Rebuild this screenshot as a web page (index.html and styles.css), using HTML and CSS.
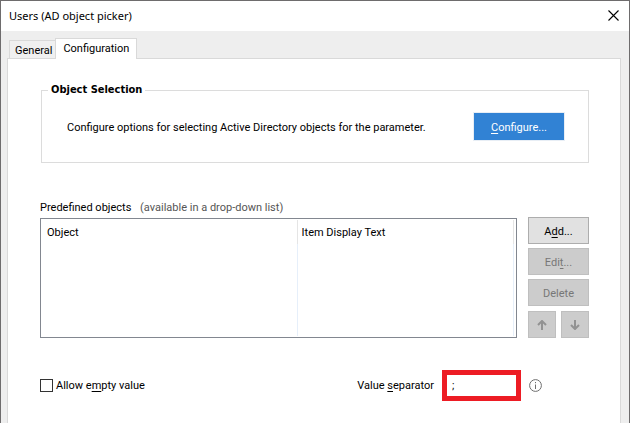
FILE: index.html
```
<!DOCTYPE html>
<html lang="en">
<head>
<meta charset="utf-8">
<title>Users (AD object picker)</title>
<link rel="stylesheet" href="styles.css">
</head>
<body>
<main class="dialog">
  <header class="titlebar">
    <h1 class="title">Users (AD object picker)</h1>
    <button class="close" type="button" aria-label="Close">
      <svg width="11" height="11" viewBox="0 0 11 11"><path d="M.5.5l10 10M10.500.500l-10 10" fill="none" stroke="#000" stroke-width="1.100"/></svg>
    </button>
  </header>
  <div class="content">
    <div class="tabs" role="tablist">
      <button class="tab" type="button" role="tab" aria-selected="false">General</button>
      <button class="tab tab-active" type="button" role="tab" aria-selected="true">Configuration</button>
    </div>
    <section class="panel" role="tabpanel">
      <fieldset class="group">
        <legend class="legend">Object Selection</legend>
        <div class="group-row">
          <p class="text">Configure options for selecting Active Directory objects for the parameter.</p>
          <button class="btn primary" type="button"><u>C</u>onfigure...</button>
        </div>
      </fieldset>
      <p class="list-label">Predefined objects <span class="hint">(available in a drop-down list)</span></p>
      <div class="list-row">
        <div class="list">
          <table class="table">
            <thead><tr><th class="col-object">Object</th><th>Item Display Text</th></tr></thead>
            <tbody><tr><td></td><td></td></tr></tbody>
          </table>
        </div>
        <div class="actions">
          <button class="btn" type="button">A<u>d</u>d...</button>
          <button class="btn" type="button" disabled>Edi<u>t</u>...</button>
          <button class="btn" type="button" disabled>Delete</button>
          <div class="arrows">
            <button class="btn" type="button" aria-label="Move up" disabled>
              <svg width="10" height="10" viewBox="0 0 10 10"><path d="M5 10V1.500M1 5l4-4 4 4" fill="none" stroke="#929292" stroke-width="2"/></svg>
            </button>
            <button class="btn" type="button" aria-label="Move down" disabled>
              <svg width="10" height="10" viewBox="0 0 10 10"><path d="M5 0v8.500M1 5l4 4 4-4" fill="none" stroke="#929292" stroke-width="2"/></svg>
            </button>
          </div>
        </div>
      </div>
      <div class="options">
        <input class="check" type="checkbox" id="empty">
        <label for="empty">Allow e<u>m</u>pty value</label>
        <label class="sep-label" for="sep">Value <u>s</u>eparator</label>
        <input class="sep" type="text" id="sep" value=";">
        <svg class="info" width="13" height="13" viewBox="0 0 13 13"><circle cx="6.500" cy="6.500" r="5.900" fill="none" stroke="#6e6e6e"/><path d="M6.500 3v1.200M6.500 5.500V10" stroke="#6e6e6e"/></svg>
      </div>
    </section>
  </div>
</main>
</body>
</html>
```
FILE: styles.css
```
* { box-sizing: border-box; }
body {
  margin: 0;
  background: #fff;
  color: #000;
  font: 11px/14px Roboto, sans-serif;
}
p, h1 { margin: 0; }
button, input { font: inherit; color: inherit; }
svg { display: block; }
u { text-underline-offset: 2px; text-decoration-thickness: 1px; }

.dialog {
  display: flex;
  flex-direction: column;
  min-height: 100vh;
  border: 1px solid #6e6c6d;
  border-bottom: 0;
  background: #eee;
}
.titlebar {
  display: flex;
  align-items: center;
  justify-content: space-between;
  height: 30px;
  padding: 0 10px 0 8px;
  background: #fff;
}
.title { font: 11px/14px "Noto Sans", sans-serif; }
.close { padding: 0 0 2px; border: 0; background: none; }

.content {
  display: flex;
  flex: 1;
  flex-direction: column;
  padding: 7px 8px 0 6px;
}
.tabs {
  display: flex;
  align-items: flex-end;
  padding-left: 2px;
}
.tab {
  height: 18px;
  padding: 2px 3px 0 5px;
  border: 1px solid #d9d9d9;
  border-width: 1px 0 0 1px;
  background: #f0f0f0;
}
.tab-active {
  position: relative;
  z-index: 1;
  height: 21px;
  margin-bottom: -1px;
  padding: 0 7px;
  border-width: 1px 1px 0;
  background: #fff;
}
.panel {
  flex: 1;
  padding: 24px 31px 0 32px;
  border: 1px solid #d9d9d9;
  border-bottom: 0;
  background: #fff;
}

.group {
  margin: 0 0 38px 1px;
  padding: 15px 23px 21px 25px;
  border: 1px solid #dcdcdc;
}
.legend {
  margin-left: -19px;
  padding: 0 3px;
  font: bold 11px/14px "DejaVu Sans Condensed", "Noto Sans", sans-serif;
}
.group-row {
  display: flex;
  align-items: center;
  justify-content: space-between;
}
.text { padding-top: 2px; }

.list-label { margin-bottom: 2px; }
.hint { margin-left: 6px; color: #555; }
.list-row { display: flex; gap: 11px; }
.list {
  display: flex;
  flex: 1;
  margin-top: 1px;
  padding: 1px 2px;
  border: 1px solid #828790;
}
.table {
  width: 100%;
  height: 100%;
  border-collapse: collapse;
  table-layout: fixed;
}
.table th {
  height: 24px;
  padding: 2px 5px 0 4px;
  border-right: 1px solid #e5e5e5;
  font-weight: normal;
  text-align: left;
}
.table td { border-right: 1px solid #e6effa; }
.col-object { width: 54%; }
.actions {
  display: flex;
  flex-direction: column;
  gap: 4px;
  width: 61px;
}
.btn {
  height: 27px;
  padding: 2px 0 0;
  border: 1px solid #adadad;
  background: #e1e1e1;
}
.btn:disabled {
  border-color: #bfbfbf;
  background: #ccc;
  color: #777;
}
.primary {
  width: 92px;
  height: 29px;
  border-color: #e8eef5;
  background: #3182d4;
  color: #fff;
}
.arrows { display: flex; gap: 5px; padding-top: 1px; }
.arrows .btn {
  display: grid;
  flex: 1;
  padding: 0;
  place-items: center;
}

.options {
  display: flex;
  align-items: center;
  padding: 32px 47px 0 0;
}
.check {
  appearance: none;
  width: 13px;
  height: 13px;
  margin: 0 3px 0 0;
  border: 1px solid #333;
  background: #fff;
}
.sep-label { margin-left: auto; }
.sep {
  width: 79px;
  height: 31px;
  margin: 0 8px;
  padding: 0 5px;
  border: 5px solid #ed1c24;
  background: #fff;
}
```
